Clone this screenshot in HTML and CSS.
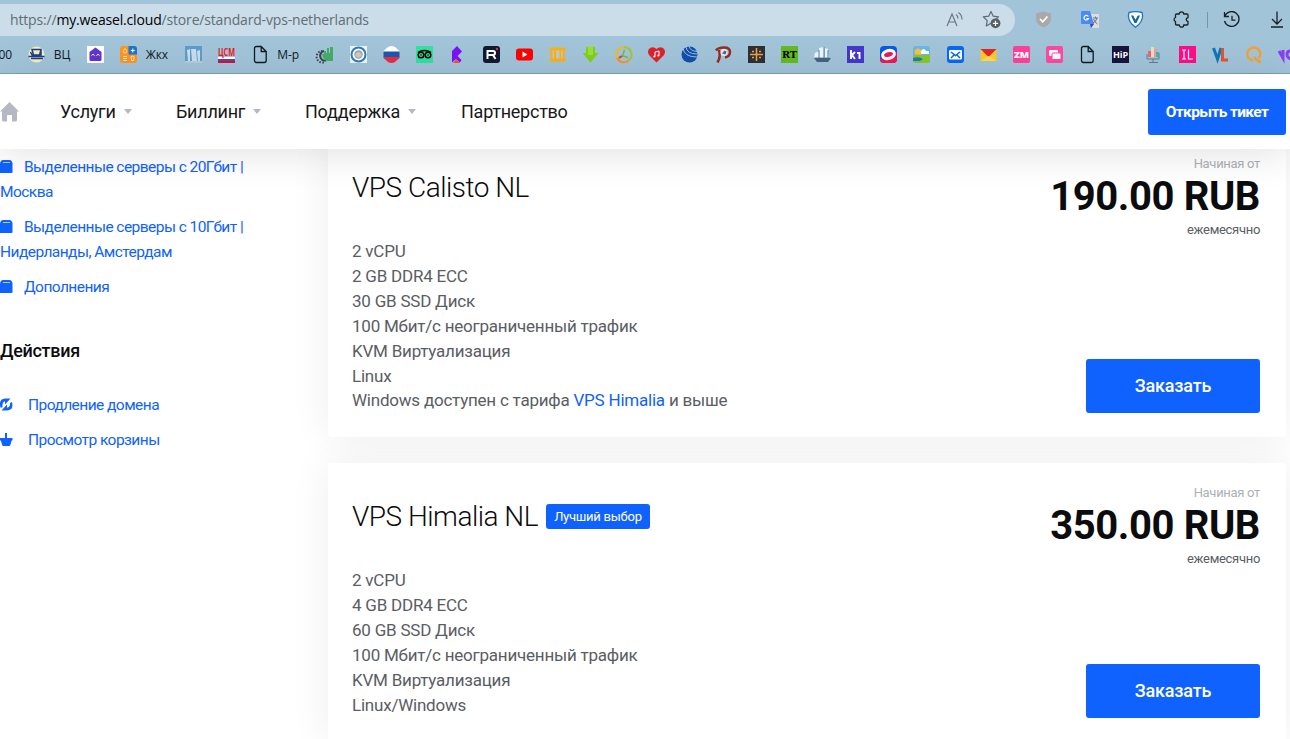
FILE: index.html
```
<!DOCTYPE html>
<html lang="ru">

<head>
    <meta charset="UTF-8">
    <meta name="viewport" content="width=device-width, initial-scale=1.0">
    <title>VPS Нидерланды</title>
    <link rel="stylesheet" href="styles.css">
</head>

<body>

    <!-- Browser bar -->
    <div class="browser">
        <div class="toolbar">
            <div class="address">
                <div class="url">https://<b>my.weasel.cloud</b>/store/standard-vps-netherlands</div>
                <svg class="read" width="18" height="18" viewBox="0 0 18 18" fill="none" stroke="#6d7880" stroke-width="1.2"><path d="M1 15 6 3l5 12M3 11h6M10 3.500q2 1.500 2 4M12.500 1.500q3.500 2.500 3.500 7"/></svg>
                <svg class="star" width="19" height="19" viewBox="0 0 19 19"><path d="M9 1.500 11.200 6.200 16.500 6.900 12.500 10.500 9 13.200 4.300 15.900 5.200 10.600 1.300 6.900 6.700 6.200Z" fill="none" stroke="#5f6a72" stroke-width="1.200" stroke-linejoin="round"/><circle cx="13.500" cy="13.300" r="4.900" fill="#555f66"/><path d="M13.500 10.700v5.200M10.900 13.300h5.200" stroke="#fff" stroke-width="1.200"/></svg>
            </div>
            <div class="tools">
                <svg width="17" height="17" viewBox="0 0 17 17"><path d="M8.500.5 16 2.500V8q0 5.500-7.500 8.500Q1 13.500 1 8V2.500Z" fill="#a9a9a9"/><path d="m5 8 2.700 2.800L12.500 5.500" fill="none" stroke="#fff" stroke-width="1.800"/></svg>
                <svg width="18" height="17" viewBox="0 0 18 17"><path d="M8 3h10v14H11z" fill="#dcdfe2"/><path d="M1 0h8l4 13H1q-1 0-1-1V1q0-1 1-1Z" fill="#4a8af4"/><path d="M9 13h4l-3 4Z" fill="#3046b8"/><path d="M12 7h5M14.500 5.500V7M16 7q-1 4-4 5M12.500 8q1 3 4 5" stroke="#68737c" fill="none"/><path d="M7.300 5.500A2.300 2.300 0 1 0 7.500 7.500H5.500" fill="none" stroke="#fff" stroke-width="1.200"/></svg>
                <svg width="17" height="17" viewBox="0 0 17 17"><path d="M2 1.500Q8.500-.2 15 1.500 17.500 10 8.500 16.300-.5 10 2 1.500Z" fill="#fff" stroke="#1877c2" stroke-width="1.300"/><path d="M4 4.500h2.200l2.300 4.300 2.300-4.300H13l-3.500 7.500h-2Z" fill="#1463a5"/></svg>
                <svg width="17" height="17" viewBox="0 0 17 17"><path d="M3.500 3h2.800a2.200 2.200 0 0 1 4.400 0H14q1 0 1 1v2.800a1.800 1.800 0 0 0 0 3.600V13q0 1-1 1h-3.300a2.200 2.200 0 0 1-4.400 0H3.500q-1 0-1-1v-2.500a2.100 2.100 0 0 1 0-4V4q0-1 1-1Z" fill="none" stroke="#172127" stroke-width="1.300" stroke-linejoin="round"/></svg>
                <i class="divider"></i>
                <svg width="18" height="17" viewBox="0 0 18 17" fill="none" stroke="#172127" stroke-width="1.300"><path d="M1.500 1v4.500H6M1.700 5.300A7.400 7.400 0 1 1 1.500 10M9 4.800v4.400h3.400"/></svg>
                <svg width="14" height="17" viewBox="0 0 14 17" fill="none" stroke="#172127" stroke-width="1.300"><path d="M7 .5v12M2 8l5 5 5-5M1 16h12"/></svg>
            </div>
        </div>
        <div class="bookmarks">
            <span class="mark-end">00</span>
            <svg viewBox="0 0 17 17"><circle cx="8.500" cy="8.500" r="8" fill="#f2f0b4"/><path d="M4 3.500h9L11.500 9h-6ZM.5 10.500h16M3 12.500h12M2.500 6l2 4M13 4v6" fill="none" stroke="#1f3b94" stroke-width="1.500"/></svg>
            <span class="label w16">ВЦ</span>
            <svg viewBox="0 0 17 17"><path d="M0 0h17v17H0z" fill="#fff"/><path d="m8.500 1.500 6 4.500v7.500q0 1.500-1.500 1.500H4q-1.500 0-1.500-1.500V6Z" fill="#6134d2"/><path d="M4.500 9.500q1.500-2.500 3 0M9.500 9.500q1.500-2.500 3 0" fill="none" stroke="#fff"/></svg>
            <svg viewBox="0 0 17 17"><rect width="17" height="17" rx="3" fill="#ff9420"/><path d="M8.500 0H14q3 0 3 3v5.500H8.500Z" fill="#1a75d2"/><path d="M12.800 2.500v4M10.800 4.500h4" stroke="#fff"/><path d="M5 2.500q3.500 4 0 4.500-3.500-.5 0-4.500M3 10.500h4M3 12.500h4M3 14.500h4M11.500 13q-1.500-3 1-3t1.300 3v1.500h-2.300Z" fill="none" stroke="#ffe5bd"/></svg>
            <span class="label w24">Жкх</span>
            <svg viewBox="0 0 17 17"><path d="M0 0h17v17H0z" fill="#5b9cce"/><path d="M2 4l3-1v13H3zM6 3h5l1 12H7zM12 5l3-1v12h-2z" fill="#c9deec"/><path d="M0 15h17v2H0z" fill="#b9ccd6"/></svg>
            <svg viewBox="0 0 17 17"><path d="M0 11h17v2H0z" fill="#fff"/><path d="M0 13h17v2H0z" fill="#3a4ed0"/><path d="M0 15h17v2H0z" fill="#f20a18"/><text x="0" y="9.500" font-size="11" font-weight="700" textLength="17" lengthAdjust="spacingAndGlyphs" fill="#ee1722">ЦСМ</text></svg>
            <svg viewBox="0 0 17 17"><path d="M2.500 2.500q0-2 2-2h4.700l5 5v9q0 2-2 2H4.500q-2 0-2-2Zm6.700-2v5h5" fill="none" stroke="#111b21" stroke-width="1.300"/></svg>
            <span class="label w24">М-р</span>
            <svg viewBox="0 0 17 17"><path d="M7 5A4.500 4.500 0 1 0 9 14.500" fill="none" stroke="#39464d" stroke-width="2"/><path d="M5.500 5A5.800 5.800 0 1 0 8 16" fill="none" stroke="#39464d" stroke-width="2" stroke-dasharray="1.500 1.500"/><path d="M5 8h2V5h2v2h1V2h2v5h1V1h3v14h-6q-4-1-5-7Z" fill="#45ad68"/></svg>
            <svg viewBox="0 0 17 17"><path d="M0 0h17v17H0z" fill="#f0f4f6"/><circle cx="8.500" cy="8.500" r="7" fill="#fff" stroke="#2b7fb8" stroke-width="2"/><circle cx="8.500" cy="8.500" r="4.200" fill="#99a6b0"/><path d="M5.500 8q3-4 6 0v2l-3 2-3-2Z" fill="#d8c9b6"/></svg>
            <svg viewBox="0 0 17 17"><path d="M.5 5 5 1q3.500-2 7 0l4.500 4v1H.5Z" fill="#fff"/><path d="M.5 5.500h16v6H.5z" fill="#1c58b5"/><path d="M.5 11h16v1L12 16q-3.500 2-7 0L.5 12Z" fill="#e52e43"/></svg>
            <svg viewBox="0 0 17 17"><path d="M0 0h17v17H0z" fill="#34e0a1"/><path d="M2 6.500q6.500-4 13 0" fill="none" stroke="#000" stroke-width="1.500"/><g fill="none" stroke="#000" stroke-width="1.500"><circle cx="5" cy="9" r="2.800"/><circle cx="12" cy="9" r="2.800"/></g><circle cx="5" cy="9" r=".8"/><circle cx="12" cy="9" r=".8"/></svg>
            <svg viewBox="0 0 17 17"><path d="M3 5 8 0l5 5.500L8.500 10l4 4-1.500 2.500-4-3.500-4 3.500Z" fill="#7b13f5"/><path d="m4 17 3.500-4 3.500 4Z" fill="#ff5023"/></svg>
            <svg viewBox="0 0 17 17"><rect width="17" height="17" rx="3" fill="#101b31"/><path d="M4.500 13V5H10q2 0 2 2t-2 2H5m5 0 2.500 4" fill="none" stroke="#fff" stroke-width="2"/><circle cx="14" cy="3" r="1.200" fill="#ef2947"/></svg>
            <svg viewBox="0 0 17 17"><rect y="2.500" width="17" height="12" rx="3" fill="#f00"/><path d="M6.500 5.500v6l5-3Z" fill="#fff"/></svg>
            <svg viewBox="0 0 17 17"><path d="M.5 1.500h16v3h-1v8h1v3H.5v-3h1v-8h-1Z" fill="#ffaf12"/><path d="M3.500 4.500H5v8H3.500zM12 4.500h1.500v8H12zM7 4.500h3.500v8H7z" fill="#b9cdcf"/></svg>
            <svg viewBox="0 0 17 17"><path d="M4 1h2.500v5h4V1H13v6h3.500l-8 9.500L.5 7H4Z" fill="#83cf19"/><path d="M6 0h5v9H6z" fill="#9ade3b"/></svg>
            <svg viewBox="0 0 17 17"><g fill="none" stroke-width="2"><path d="M8.500 1.200A7.300 7.300 0 0 1 14 14" stroke="#a5c536"/><path d="M14 14A7.300 7.300 0 0 1 2 12" stroke="#f49530"/><path d="M2 12A7.300 7.300 0 0 1 8.500 1.200" stroke="#efbd21"/><path d="m9.500 4-2 6-4 1.500M8 10l5 1.500" stroke="#78b844" stroke-width="1.500"/><path d="m7 10-3 2" stroke="#e33a3a"/></g></svg>
            <svg viewBox="0 0 17 17"><path d="M8.500 16.500 1 9q-2.500-4 1-7 3.500-2 6.500 1 3-3 6.500-1 3.500 3 1 7Z" fill="#df202c"/><path d="M7 10.500V6l4-1v4.500" fill="none" stroke="#fff"/><circle cx="6.300" cy="10.500" r="1.100" fill="#fff"/><circle cx="10.300" cy="9.500" r="1.100" fill="#fff"/></svg>
            <svg viewBox="0 0 17 17"><circle cx="8.500" cy="8.500" r="8" fill="#124faa"/><path d="M2 2q1 9 14 9M5 1q1 7 11 7M8 0q1 5 8 5.500" fill="none" stroke="#9ac3e2"/></svg>
            <svg viewBox="0 0 17 17"><path d="M2.500 16.500Q6 11 4 4M1 4.500Q3 1.500 9 1.500q6 0 6 4.500t-5 5.500" fill="none" stroke="#9d2924" stroke-width="2.500"/><circle cx="9" cy="6.500" r="3.500" fill="#e6edf1"/><path d="m7 7.500 2.500-3 2 1-1 3Z" fill="#357199"/></svg>
            <svg viewBox="0 0 17 17"><path d="M0 0h17v17H0z" fill="#302f32"/><path d="M2 8.500h13M8.500 2v13" stroke="#e7a34d" stroke-width="1.600"/><path d="M4 5.500h2M5 4.500v2M11 5.500h2M12 4.500v2M4 11.500h2M5 10.500v2M11 11.500h2M12 10.500v2" stroke="#e7a34d"/></svg>
            <svg viewBox="0 0 17 17"><path d="M0 0h17v17H0z" fill="#62bb20"/><text class="slab" x="1" y="12" font-size="10" textLength="15" lengthAdjust="spacingAndGlyphs" fill="#000">RT</text></svg>
            <svg viewBox="0 0 17 17"><path d="M0 12h17l-3 4H3Z" fill="#45637e"/><path d="M1 7l4-2v6H0zM5 2l5-1v10H5zM11 2l3 1 1 8h-4Z" fill="#f0f5fa"/><path d="M5 4v8M10 1v11M14 4v8" stroke="#3f83bf"/></svg>
            <svg viewBox="0 0 17 17"><path d="M0 0h17v17H0z" fill="#4637ce"/><path d="M4 4v9M8 6 5 9l3 4M10 7h2.500v6" fill="none" stroke="#fff" stroke-width="2"/></svg>
            <svg viewBox="0 0 17 17"><rect width="17" height="17" rx="4" fill="#0759e8"/><path d="M0 12Q8 17 17 6v7q0 4-4 4H4q-4 0-4-4Z" fill="#f51457"/><ellipse cx="8.500" cy="8.500" rx="7.500" ry="5.500" transform="rotate(-15 8.500 8.500)" fill="#fff"/><ellipse cx="8.500" cy="8.500" rx="4.500" ry="2.300" transform="rotate(-15 8.500 8.500)" fill="#f51457"/></svg>
            <svg viewBox="0 0 17 17"><rect width="17" height="17" rx="3" fill="#68b7e9"/><circle cx="5" cy="6" r="3.500" fill="#f8c23b"/><path d="M8 5q3-4 5 0h3v3H8Z" fill="#fff"/><path d="M0 10q5-3 9 0 4-2 8-1v5q0 3-3 3H3q-3 0-3-3Z" fill="#88c72b"/><path d="M0 12q6-2 10 1l-3 2H0Z" fill="#257bb6"/></svg>
            <svg viewBox="0 0 17 17"><rect width="17" height="17" rx="3" fill="#0868f5"/><rect x="2" y="4" width="13" height="9.500" rx="1" fill="#fff"/><path d="m4 6 4.500 3.500L13 6M4 12l3-3M13 12l-3-3" fill="none" stroke="#0868f5" stroke-width="1.500"/></svg>
            <svg viewBox="0 0 17 17"><path d="M.5 3h16v12H.5z" fill="#ffc82f"/><path d="M.5 3h16l-8 8Z" fill="#e4262b"/><path d="m.5 15 8-5 8 5Z" fill="#ffdd4d"/></svg>
            <svg viewBox="0 0 17 17"><rect width="17" height="17" rx="2" fill="#ff4099"/><text x="1" y="12" font-size="9" font-weight="900" textLength="15" lengthAdjust="spacingAndGlyphs" fill="#fff">ZM</text></svg>
            <svg viewBox="0 0 17 17"><rect width="17" height="17" rx="2" fill="#ff49a0"/><rect x="3" y="4" width="9" height="6" rx="1" fill="#fff"/><rect x="6" y="7" width="9" height="6.500" rx="1" fill="#fff" stroke="#ff49a0"/></svg>
            <svg viewBox="0 0 17 17"><path d="M2.500 2.500q0-2 2-2h4.700l5 5v9q0 2-2 2H4.500q-2 0-2-2Zm6.700-2v5h5" fill="none" stroke="#111b21" stroke-width="1.300"/></svg>
            <svg viewBox="0 0 17 17"><path d="M0 0h17v17H0z" fill="#17143e"/><text x="1" y="11.500" font-size="8.500" font-weight="700" textLength="15" lengthAdjust="spacingAndGlyphs" fill="#fff">HiP</text></svg>
            <svg viewBox="0 0 17 17"><path d="M2 8v5h12V7M8 13v3M4 16.500h9" fill="none" stroke="#637c90"/><path d="M3 5h3v6H3z" fill="#eb676d"/><path d="M6 1h3v10H6z" fill="#e9ddba"/><path d="M9 3h3v8H9z" fill="#ed9aa8"/><path d="M11 6h3v5h-3z" fill="#42b2ba"/></svg>
            <svg viewBox="0 0 17 17"><path d="M0 0h17v17H0z" fill="#ff0c8a"/><path d="M3 4h4M5 4v9M3 13h4M9.500 3.500V13H14" fill="none" stroke="#fff" stroke-width="1.200"/></svg>
            <svg viewBox="0 0 17 17"><path d="m1.500 2 4 11 3.500-11" fill="none" stroke="#0878bd" stroke-width="3"/><path d="M10.500 2v12H16" fill="none" stroke="#e65328" stroke-width="3"/></svg>
            <svg viewBox="0 0 17 17"><path d="M13.500 12.500A6.500 6.500 0 1 0 8 14.500M9 11q3 4 7 5" fill="none" stroke="#fb9f29" stroke-width="2.300"/></svg>
            <svg viewBox="0 0 17 17"><path d="m1 5 4 7V4M16 5.500q-7-2-7 3t7 4" fill="none" stroke="#8b3ff1" stroke-width="3"/></svg>
        </div>
    </div>

    <header class="site-header">
        <svg class="home" width="19" height="20" viewBox="0 0 19 20"><path d="M9.500 0 19 9.500h-2V18q0 1.500-1.500 1.500H12V13H7v6.500H3.500Q2 19.500 2 18V9.500H0Z" fill="#b3b8c2"/></svg>
        <nav>
            <a class="drop nav-services" href="#">Услуги</a>
            <a class="drop nav-billing" href="#">Биллинг</a>
            <a class="drop nav-support" href="#">Поддержка</a>
            <a href="#">Партнерство</a>
        </nav>
        <a class="btn ticket" href="#">Открыть тикет</a>
    </header>

    <div class="page">
        <aside class="sidebar">
            <ul class="categories">
                <li><a href="#"><svg width="13" height="13" viewBox="0 0 13 13"><path d="M0 3.500Q.5 0 3 0h6.500Q12 0 12.500 3.500V12q0 1-1 1H0Z" fill="#0f62fe"/><path d="M3 2.500h7" stroke="#a9c8ff"/></svg>Выделенные серверы с 20Гбит | Москва</a></li>
                <li><a href="#"><svg width="13" height="13" viewBox="0 0 13 13"><path d="M0 3.500Q.5 0 3 0h6.500Q12 0 12.500 3.500V12q0 1-1 1H0Z" fill="#0f62fe"/><path d="M3 2.500h7" stroke="#a9c8ff"/></svg>Выделенные серверы с 10Гбит | Нидерланды, Амстердам</a></li>
                <li><a href="#"><svg width="13" height="13" viewBox="0 0 13 13"><path d="M0 3.500Q.5 0 3 0h6.500Q12 0 12.500 3.500V12q0 1-1 1H0Z" fill="#0f62fe"/><path d="M3 2.500h7" stroke="#a9c8ff"/></svg>Дополнения</a></li>
            </ul>
            <h3>Действия</h3>
            <ul class="actions">
                <li><a href="#"><svg width="13" height="13" viewBox="0 0 13 13"><path d="M0 8Q-1 .5 6 .5h4.500L5 6.500V3.300Q2 4 2.500 9L1 10ZM12 4q2 8.500-5 8.500H1.500L7 6.500v3.200Q10.500 9 10 5Z" fill="#0f62fe"/></svg>Продление домена</a></li>
                <li><a href="#"><svg width="13" height="13" viewBox="0 0 13 13"><path d="M0 5h12.500v2l-1 1-1 3.500q-.3 1.500-1.500 1.500H3.500Q2.300 13 2 11.500L1 8 0 7ZM5 0h2v5H5z" fill="#0f62fe"/></svg>Просмотр корзины</a></li>
            </ul>
        </aside>

        <main class="products">
            <section class="product">
                <div class="info">
                    <h2>VPS Calisto NL</h2>
                    <p>2 vCPU<br>2 GB DDR4 ECC<br>30 GB SSD Диск<br>100 Мбит/с неограниченный трафик<br>KVM Виртуализация<br>Linux<br>Windows доступен с тарифа <a href="#">VPS Himalia</a> и выше</p>
                </div>
                <div class="pricing">
                    <span class="from">Начиная от</span>
                    <span class="price">190.00 RUB</span>
                    <span class="cycle">ежемесячно</span>
                    <a class="btn order" href="#">Заказать</a>
                </div>
            </section>
            <section class="product">
                <div class="info">
                    <h2>VPS Himalia NL <span class="badge">Лучший выбор</span></h2>
                    <p>2 vCPU<br>4 GB DDR4 ECC<br>60 GB SSD Диск<br>100 Мбит/с неограниченный трафик<br>KVM Виртуализация<br>Linux/Windows</p>
                </div>
                <div class="pricing">
                    <span class="from">Начиная от</span>
                    <span class="price">350.00 RUB</span>
                    <span class="cycle">ежемесячно</span>
                    <a class="btn order" href="#">Заказать</a>
                </div>
            </section>
        </main>
    </div>

</body>

</html>
```

FILE: styles.css
```
* {
    box-sizing: border-box;
}

body {
    margin: 0;
    height: 739px;
    overflow: hidden;
    background-color: #fff;
    font-family: Roboto, sans-serif;
    color: #5a5d63;
}

a {
    color: #0f62fe;
    text-decoration: none;
}

ul {
    list-style: none;
    margin: 0;
    padding: 0;
}

svg {
    display: block;
    flex: none;
}

/* Browser bar */
.browser {
    height: 74px;
    background-color: #a2c4d9;
    border-bottom: 1px solid #7f9fb2;
    font-family: "Open Sans", "Noto Sans", sans-serif;
    overflow: hidden;
}

.toolbar {
    display: flex;
    align-items: center;
    height: 39px;
}

.address {
    display: flex;
    align-items: center;
    width: 1015px;
    height: 32px;
    padding: 0 14px 0 10px;
    background-color: #cadde9;
    border-radius: 0 16px 16px 0;
}

.url {
    flex: 1;
    font-size: 14px;
    letter-spacing: -0.17px;
    color: #626d74;
}

.url b {
    font-weight: 400;
    color: #000;
}

.star {
    margin-left: 18px;
}

.tools {
    display: flex;
    align-items: center;
    flex: 1;
    padding-left: 20px;
    gap: 28.7px;
}

.divider {
    width: 1px;
    height: 16px;
    margin: 0 -13px 0 -12px;
    background-color: #7895a5;
}

.bookmarks {
    display: flex;
    align-items: center;
    gap: 16.150px;
    height: 31px;
    font-size: 12px;
    letter-spacing: -0.1px;
    color: #10181d;
}

.bookmarks svg {
    width: 17px;
    height: 17px;
    overflow: visible;
}

.slab {
    font-family: "DejaVu Serif", serif;
    font-weight: 700;
}

.mark-end {
    display: flex;
    justify-content: flex-end;
    flex: none;
    width: 12px;
}

.label {
    flex: none;
    margin-left: -7.5px;
    white-space: nowrap;
}

.w16 {
    width: 17px;
}

.w24 {
    width: 23.5px;
}

/* Header */
.site-header {
    position: relative;
    z-index: 2;
    display: flex;
    align-items: center;
    height: 75px;
    padding-right: 4px;
    background-color: #fff;
    box-shadow: 0 4px 40px rgba(0, 0, 0, 0.12);
}

.site-header nav {
    display: flex;
    flex: 1;
    margin-left: 41px;
    font-size: 18px;
    letter-spacing: -0.25px;
}

.site-header nav a {
    color: #17181a;
}

.drop::after {
    content: "";
    display: inline-block;
    margin-left: 8px;
    vertical-align: 4px;
    border: 4px solid transparent;
    border-top: 5px solid #b3b8c2;
    border-bottom: 0;
}

.nav-services {
    width: 116px;
}

.nav-billing {
    width: 129px;
}

.nav-support {
    width: 156px;
}

.btn {
    display: block;
    background-color: #0f62fe;
    border-radius: 3px;
    color: #fff;
    text-align: center;
}

.ticket {
    width: 138px;
    height: 46px;
    line-height: 46px;
    font-size: 15.5px;
    font-weight: 700;
    letter-spacing: -0.65px;
}

/* Page body */
.page {
    display: flex;
    height: 590px;
}

.sidebar {
    width: 328px;
    padding-top: 6px;
    font-size: 15.5px;
    line-height: 25px;
    letter-spacing: -0.55px;
}

.sidebar li {
    width: 255px;
    margin-bottom: 10px;
}

.sidebar svg {
    display: inline-block;
    margin-right: 11px;
    vertical-align: -1px;
}

.sidebar h3 {
    margin: 38px 0 30px;
    font-size: 18px;
    font-weight: 500;
    line-height: 25px;
    letter-spacing: -0.3px;
    color: #0b0c0d;
}

.actions svg {
    margin-right: 15px;
}

.products {
    width: 958px;
    margin-top: -15px;
}

.product {
    display: flex;
    justify-content: space-between;
    margin-bottom: 26px;
    padding: 24px;
    background-color: #fff;
    border-radius: 4px;
    box-shadow: 0 0 40px rgba(0, 0, 0, 0.07);
}

.product h2 {
    display: flex;
    align-items: center;
    height: 60px;
    margin: -1px 0 22px;
    font-size: 28px;
    font-weight: 300;
    letter-spacing: -0.5px;
    color: #0b0c0d;
}

.product p {
    margin: 0;
    font-size: 17px;
    line-height: 24.900px;
    letter-spacing: -0.22px;
}

.badge {
    margin-left: 8px;
    width: 104px;
    height: 25px;
    border-radius: 3px;
    background-color: #0f62fe;
    color: #fff;
    font-size: 13px;
    font-weight: 400;
    letter-spacing: -0.25px;
    line-height: 26px;
    text-align: center;
}

.pricing {
    display: flex;
    flex-direction: column;
    align-items: flex-end;
    padding-right: 2px;
}

.from {
    margin-top: -4px;
    font-size: 13px;
    line-height: 19px;
    letter-spacing: -0.3px;
    color: #adb0b5;
}

.price {
    font-size: 40px;
    font-weight: 700;
    line-height: 48px;
    letter-spacing: -0.4px;
    color: #0b0c0d;
}

.cycle {
    font-size: 13px;
    line-height: 18px;
    letter-spacing: -0.3px;
}

.order {
    width: 174px;
    height: 54px;
    margin-top: auto;
    font-size: 18px;
    font-weight: 500;
    letter-spacing: -0.2px;
    line-height: 54px;
}
```
